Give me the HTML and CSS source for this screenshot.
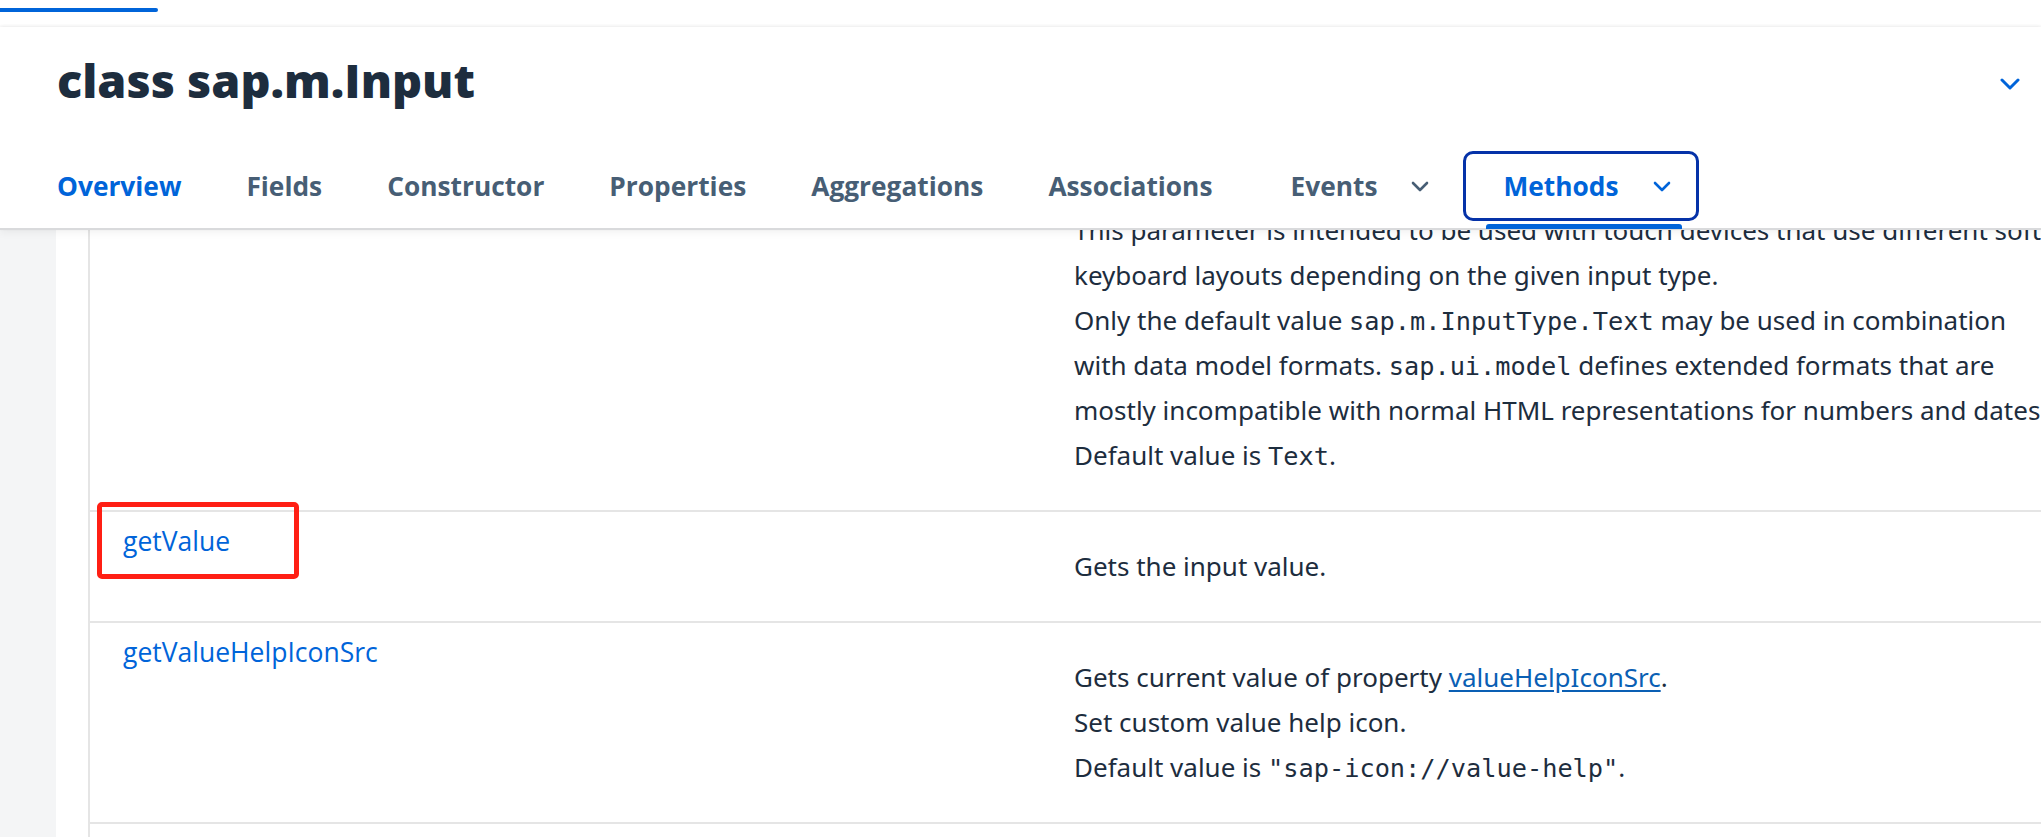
FILE: index.html
```html
<!DOCTYPE html>
<html lang="en">
<head>
<meta charset="utf-8">
<title>class sap.m.Input</title>
<link rel="stylesheet" href="styles.css">
</head>
<body>
<div class="app">
  <div class="topbar"><div class="progress"></div></div>
  <header class="header">
    <div class="title-row">
      <h1 class="title">class sap.m.Input</h1>
      <button class="collapse" aria-label="Collapse header">
        <svg width="20" height="12" viewBox="0 0 20 12"><path d="M2 2 L10 10 L18 2" fill="none" stroke="currentColor" stroke-width="3" stroke-linecap="round" stroke-linejoin="round"/></svg>
      </button>
    </div>
    <nav class="tabs">
      <a class="tab active"><span class="label">Overview</span></a>
      <a class="tab"><span class="label">Fields</span></a>
      <a class="tab"><span class="label">Constructor</span></a>
      <a class="tab"><span class="label">Properties</span></a>
      <a class="tab"><span class="label">Aggregations</span></a>
      <a class="tab"><span class="label">Associations</span></a>
      <a class="tab menu"><span class="label">Events</span><svg class="chev" width="18" height="11" viewBox="0 0 18 11"><path d="M2 2 L9 9 L16 2" fill="none" stroke="currentColor" stroke-width="2.6" stroke-linecap="round" stroke-linejoin="round"/></svg></a>
      <a class="tab menu selected focused"><span class="label">Methods</span><svg class="chev" width="18" height="11" viewBox="0 0 18 11"><path d="M2 2 L9 9 L16 2" fill="none" stroke="currentColor" stroke-width="2.6" stroke-linecap="round" stroke-linejoin="round"/></svg></a>
    </nav>
  </header>
  <div class="body">
    <div class="side"></div>
    <div class="scroller">
      <div class="table">
        <div class="row">
          <div class="name"><a class="method">getType</a></div>
          <div class="desc">
            Gets current value of property <a class="ref">type</a>.<br>
            Defines the HTML type of the internal <code>input</code> tag (e.g. Text, Number, Email, Phone).<br>
            The particular effect of this property differs depending on the browser and the current<br>
            language settings, especially for the type Number.<br>
            This parameter is intended to be used with touch devices that use different soft<span class="anchor"></span><br>
            keyboard layouts depending on the given input type.<br>
            Only the default value <code>sap.m.InputType.Text</code> may be used in combination<br>
            with data model formats. <code>sap.ui.model</code> defines extended formats that are<br>
            mostly incompatible with normal HTML representations for numbers and dates.<br>
            Default value is <code>Text</code>.
          </div>
        </div>
        <div class="row">
          <div class="name"><a class="method marked">getValue</a></div>
          <div class="desc">Gets the input value.</div>
        </div>
        <div class="row">
          <div class="name"><a class="method">getValueHelpIconSrc</a></div>
          <div class="desc">
            Gets current value of property <a class="ref">valueHelpIconSrc</a>.<br>
            Set custom value help icon.<br>
            Default value is <code>"sap-icon://value-help"</code>.
          </div>
        </div>
        <div class="row">
          <div class="name"><a class="method">getValueHelpOnly</a></div>
          <div class="desc">Gets current value of property <a class="ref">valueHelpOnly</a>.</div>
        </div>
      </div>
    </div>
  </div>
</div>
<script src="script.js"></script>
</body>
</html>
```
FILE: styles.css
```css
*, *::before, *::after { box-sizing: border-box; }
html, body { margin: 0; padding: 0; }
body {
  width: 2041px;
  height: 837px;
  overflow: hidden;
  background: #fff;
  font-family: "Noto Sans", sans-serif;
  color: #1d2d3e;
}
.app { display: flex; flex-direction: column; height: 837px; }
.topbar { flex: none; height: 27px; }
.progress {
  width: 158px; height: 4px; margin-top: 8px;
  background: #0064d9; border-radius: 0 2px 2px 0;
}
.header {
  flex: none; position: relative; z-index: 2;
  height: 203px; background: #fff;
  border-bottom: 2px solid #d9dadc;
  box-shadow: 0 -1px 3px rgba(0,0,0,.07), 0 3px 8px rgba(0,0,0,.05);
  display: flex; flex-direction: column;
}
.title-row {
  height: 120px; padding: 25px 21px 0 57px;
  display: flex; justify-content: space-between; align-items: flex-start;
}
.title {
  margin: 0; font: 800 46.8px/56px "Open Sans", sans-serif;
  color: #1d2d3e;
}
.collapse {
  margin-top: 4px; height: 56px; padding: 0; border: 0; background: none;
  color: #0064d9; display: flex; align-items: center;
}
.tabs {
  display: flex; align-items: center;
  height: 70px; margin-top: 4px; padding-left: 20px;
}
.tab {
  position: relative;
  display: inline-flex; align-items: center;
  height: 70px; padding: 0 25px 0 34px;
  border: 3px solid transparent; border-radius: 10px;
  font: 700 26.3px "Open Sans", sans-serif; color: #475e75;
  white-space: nowrap;
}
.tab.menu { margin-left: 10px; padding-left: 37px; }
.tab.menu + .tab.menu { margin-left: 6px; }
.tab.active, .tab.selected { color: #0064d9; }
.tab.focused { border-color: #0532a8; }
.tab.selected::after {
  content: ""; position: absolute; left: 20px; right: 14px; bottom: -11px;
  height: 5px; background: #0064d9; border-radius: 3px 3px 0 0;
}
.chev { margin-left: 34px; }
.body { flex: 1; display: flex; min-height: 0; }
.side { flex: none; width: 56px; background: #f4f5f6; }
.scroller { flex: 1; overflow: hidden; padding-left: 32px; }
.table { border-left: 2px solid #e5e5e5; width: max-content; min-width: 100%; }
.row {
  display: grid; grid-template-columns: 952px auto;
  border-bottom: 2px solid #e5e5e5;
}
.name { position: relative; padding: 7px 0 0 33px; }
.method {
  font: 400 26.5px/45px "Open Sans", sans-serif; color: #0064d9;
}
.marked::after {
  content: ""; position: absolute; left: 7px; top: -10px;
  width: 202px; height: 77px;
  border: 5px solid #ff1f14; border-radius: 5px;
}
.desc {
  padding: 32px;
  font: 400 26px/45px "Noto Sans", sans-serif; color: #1d2d3e;
  white-space: nowrap;
}
.ref { color: #0a5fb4; text-decoration: underline; text-underline-offset: 3px; }
code { font-family: "DejaVu Sans Mono", monospace; font-size: 25.3px; line-height: 1; }
.anchor { display: inline-block; width: 0; height: 0; }
```
FILE: script.js
```js
(function () {
  var scroller = document.querySelector('.scroller');
  var anchor = document.querySelector('.anchor');
  if (scroller && anchor) {
    scroller.scrollTop += anchor.getBoundingClientRect().bottom - 240;
  }
})();
```
